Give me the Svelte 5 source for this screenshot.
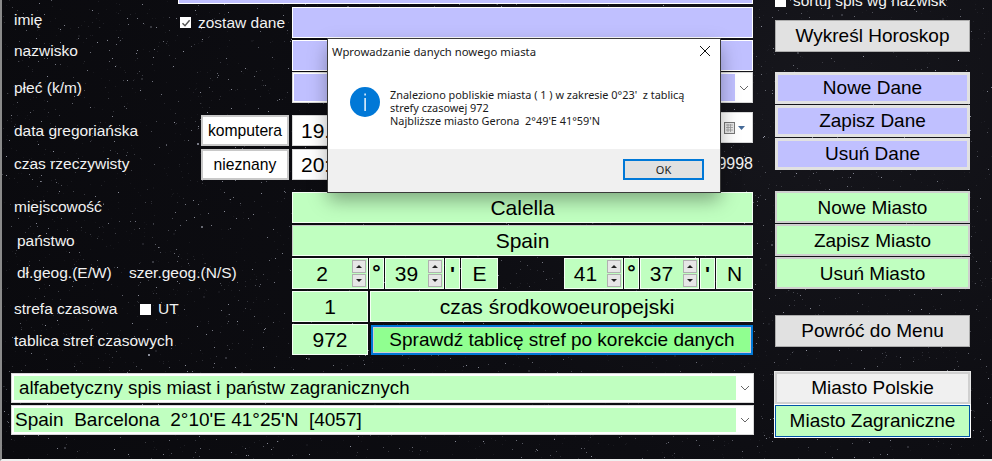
<script>
  let seed = 7;
  function rnd() { seed = (seed * 16807) % 2147483647; return seed / 2147483647; }
  const stars = Array.from({ length: 5200 }, () => {
    const r = rnd();
    return { x: Math.floor(rnd() * 992), y: Math.floor(rnd() * 461), s: r > 0.985 ? 2 : 1, o: (0.05 + Math.pow(rnd(), 3) * 0.6).toFixed(2) };
  });
</script>

<div class="screen">
  <svg class="sky" width="992" height="461" aria-hidden="true">
    {#each stars as st}<rect x={st.x} y={st.y} width={st.s} height={st.s} fill="#d8dcec" opacity={st.o} />{/each}
  </svg>

  <main class="main">
    <section class="form">
      <div class="toprow"><div class="topfield"></div></div>

      <div class="row r-imie">
        <span class="label l-imie">imię</span>
        <span class="keep"><span class="check"><svg width="12" height="12" viewBox="0 0 12 12"><path d="M2.500 6.200 5 8.800 9.600 3.200" fill="none" stroke="#555" stroke-width="1.400"/></svg></span>zostaw dane</span>
        <div class="field lav grow"></div>
      </div>
      <div class="row r-naz">
        <span class="label">nazwisko</span>
        <div class="field lav grow"></div>
      </div>
      <div class="row r-plec">
        <span class="label">płeć (k/m)</span>
        <div class="select grow"><div class="selin lav-bg"></div><svg class="chev" width="10" height="6" viewBox="0 0 10 6"><path d="M1 1 5 5 9 1" fill="none" stroke="#666" stroke-width="1"/></svg></div>
      </div>

      <div class="row r-data">
        <span class="label wide">data gregoriańska</span>
        <div class="smallbtn">komputera</div>
        <div class="field white timef">19.</div>
        <div class="picker"><svg width="22" height="14" viewBox="0 0 22 14"><rect x="0.500" y="1.500" width="10" height="11" fill="#e8e8e8" stroke="#777"/><path d="M2 4h7M2 6.500h7M2 9h7M4 3v8M6.500 3v8" stroke="#999" stroke-width="0.800"/><path d="M14 5h7l-3.500 4z" fill="#456a98"/></svg></div>
      </div>
      <div class="row r-czas">
        <span class="label wide">czas rzeczywisty</span>
        <div class="smallbtn">nieznany</div>
        <div class="field white timef">20:</div>
        <span class="juldate">9998</span>
      </div>

      <div class="row r-miej">
        <span class="label">miejscowość</span>
        <div class="field grn grow center">Calella</div>
      </div>
      <div class="row r-pan">
        <span class="label in">państwo</span>
        <div class="field grn grow center edged">Spain</div>
      </div>
      <div class="row r-geo">
        <span class="label in geo1">dł.geog.(E/W)</span>
        <span class="label geo2">szer.geog.(N/S)</span>
        <div class="coords">
          <div class="field grn num w76">2<span class="spin"><i class="up"></i><i class="down"></i></span></div>
          <div class="field grn sym"><span class="raised">°</span></div>
          <div class="field grn num w60">39<span class="spin"><i class="up"></i><i class="down"></i></span></div>
          <div class="field grn sym">'</div>
          <div class="field grn dir">E</div>
          <div class="gapfill"></div>
          <div class="field grn num w60">41<span class="spin"><i class="up"></i><i class="down"></i></span></div>
          <div class="field grn sym"><span class="raised">°</span></div>
          <div class="field grn num w60">37<span class="spin"><i class="up"></i><i class="down"></i></span></div>
          <div class="field grn sym">'</div>
          <div class="field grn dir">N</div>
        </div>
      </div>
      <div class="row r-strefa">
        <span class="label strefa">strefa czasowa</span>
        <span class="ut"><span class="check"></span>UT</span>
        <div class="field grn w76 center">1</div>
        <div class="field grn grow center offset">czas środkowoeuropejski</div>
      </div>
      <div class="row r-tab">
        <span class="label">tablica stref czasowych</span>
        <div class="field grn w76 center">972</div>
        <div class="focusbtn">Sprawdź tablicę stref po korekcie danych</div>
      </div>

      <div class="combo first">
        <div class="comboin">alfabetyczny spis miast i państw zagranicznych</div>
        <svg class="chev" width="10" height="6" viewBox="0 0 10 6"><path d="M1 1 5 5 9 1" fill="none" stroke="#666" stroke-width="1"/></svg>
      </div>
      <div class="combo">
        <div class="comboin tight">Spain&nbsp; Barcelona&nbsp; 2°10'E 41°25'N&nbsp; [4057]</div>
        <svg class="chev" width="10" height="6" viewBox="0 0 10 6"><path d="M1 1 5 5 9 1" fill="none" stroke="#666" stroke-width="1"/></svg>
      </div>
    </section>

    <aside class="side">
      <div class="sort"><span class="check"></span>sortuj spis wg nazwisk</div>
      <div class="btn gray b-wyk">Wykreśl Horoskop</div>
      <div class="btn lavb b-nowe">Nowe Dane</div>
      <div class="btn lavb">Zapisz Dane</div>
      <div class="btn lavb">Usuń Dane</div>
      <div class="btn grnb b-miasto">Nowe Miasto</div>
      <div class="btn grnb">Zapisz Miasto</div>
      <div class="btn grnb">Usuń Miasto</div>
      <div class="btn gray b-menu">Powróć do Menu</div>
      <div class="btn pol">Miasto Polskie</div>
      <div class="btn zag">Miasto Zagraniczne</div>
    </aside>
  </main>

  <div class="dialog" role="dialog">
    <div class="dtitle">Wprowadzanie danych nowego miasta
      <svg class="close" width="12" height="12" viewBox="0 0 12 12"><path d="M1 1l10 10M11 1 1 11" stroke="#111" stroke-width="1"/></svg>
    </div>
    <div class="dbody">
      <svg class="info" width="30" height="30" viewBox="0 0 30 30"><circle cx="15" cy="15" r="15" fill="#0078d7"/><rect x="14.400" y="6.500" width="1.400" height="2" fill="#fff"/><rect x="14.400" y="11" width="1.400" height="13" fill="#fff"/></svg>
      <p>Znaleziono pobliskie miasta ( 1 ) w zakresie 0°23'&nbsp; z tablicą<br>strefy czasowej 972<br>Najbliższe miasto Gerona&nbsp; 2°49'E 41°59'N</p>
    </div>
    <div class="dfoot"><div class="ok">OK</div></div>
  </div>
</div>

<style>
  :global(body) { margin: 0; background: #000; }
  .screen {
    position: relative; width: 992px; height: 461px; overflow: hidden; box-sizing: border-box;
    background: radial-gradient(circle at 82% 20%, #16161c 0, #0d0d12 45%, #0a0a0e 100%);
    border-left: 2px solid #8a8a8a; border-bottom: 2px solid #f0f0f0;
    font-family: "Liberation Sans", Arial, sans-serif; color: #000;
  }
  .sky { position: absolute; left: -2px; top: 0; }
  .main { position: relative; display: flex; }
  .form { width: 773px; flex: none; }
  .side { display: flex; flex-direction: column; width: 195px; }

  .toprow { height: 5px; padding-left: 176px; }
  .topfield { height: 3px; width: 573px; background: #c0c0ff; border: 1px solid #fff; border-top: 0; }

  .row { display: flex; align-items: stretch; width: 751px; height: 31px; position: relative; }
  .r-imie { margin-top: 2px; }
  .r-naz { margin-top: 2px; }
  .r-plec { margin-top: 1px; }
  .r-data { margin-top: 12px; }
  .r-czas { margin-top: 3px; }
  .r-miej { margin-top: 12px; }
  .r-pan, .r-geo, .r-strefa, .r-tab { margin-top: 2px; }

  .label { box-sizing: border-box; width: 290px; padding-left: 12px; flex: none; color: #f2f2f2; font-size: 15.500px; line-height: 30px; white-space: nowrap; }
  .label.in { padding-left: 15px; }
  .label.wide { width: 199px; }
  .label.geo1 { width: 127px; }
  .label.geo2 { width: 163px; padding-left: 0; }
  .label.strefa { width: 138px; margin-top: 3px; }
  .label.l-imie { width: 178px; margin-top: -2px; }
  .r-naz .label { margin-top: -4px; }
  .r-plec .label { margin-top: 1px; }
  .r-data .label { margin-top: 1px; }
  .r-pan .label { margin-top: 1px; }
  .r-tab .label { margin-top: 2px; }

  .keep { width: 112px; flex: none; color: #f2f2f2; font-size: 15.500px; display: flex; align-items: center; white-space: nowrap; }
  .ut { width: 152px; flex: none; color: #f2f2f2; font-size: 15.500px; display: flex; align-items: center; white-space: nowrap; padding-top: 5px; box-sizing: border-box; }
  .check { width: 11px; height: 11px; background: #fff; display: inline-block; margin-right: 7px; flex: none; }
  .check svg { display: block; }

  .field { box-sizing: border-box; border: 1px solid #fff; display: flex; align-items: center; position: relative; font-size: 21px; white-space: nowrap; }
  .grow { flex: 1; }
  .lav { background: #c0c0ff; }
  .grn { background: #c0ffc0; border-color: #f4fff4; }
  .edged { border-color: #c8c8c8 #f4fff4 #f4fff4 #c8c8c8; }
  .offset { padding-right: 9px; }
  .white { background: #fff; border-color: #d8d8d8; }
  .center { justify-content: center; }
  .w76 { width: 76px; flex: none; margin-right: 2px; }
  .timef { width: 110px; flex: none; padding-left: 8px; }
  .picker { width: 60px; margin-left: auto; margin-top: -3px; margin-bottom: 3px; box-sizing: border-box; background: #fff; border: 1px solid #d8d8d8; display: flex; align-items: center; justify-content: flex-end; padding-right: 6px; }
  .juldate { margin-left: auto; color: #f2f2f2; font-size: 16px; line-height: 30px; }

  .select { box-sizing: border-box; background: #fff; border: 1px solid #d8d8d8; padding: 1px; display: flex; align-items: stretch; position: relative; }
  .selin { flex: 1; margin-right: 16px; }
  .lav-bg { background: #c0c0ff; }
  .chev { position: absolute; right: 3px; top: 50%; margin-top: -3px; }

  .smallbtn { width: 88px; flex: none; margin-right: 3px; box-sizing: border-box; background: #fff; border: 2px solid #c8c8c8; font-size: 15.700px; display: flex; align-items: center; justify-content: center; }

  .coords { display: flex; flex: 1; gap: 1px; }
  .coords .w76 { margin-right: 0; }
  .num { justify-content: center; padding-right: 16px; }
  .w60 { width: 59px; flex: none; }
  .sym { width: 15px; flex: none; justify-content: center; font-weight: bold; }
  .raised { margin-top: -3px; }
  .dir { width: 37px; flex: none; justify-content: center; }
  .gapfill { flex: 1; }
  .spin { position: absolute; right: 1px; top: 1px; bottom: 1px; width: 14px; display: flex; flex-direction: column; gap: 1px; }
  .spin i { flex: 1; background: #e6e6e6; border: 1px solid #b0b0b0; box-sizing: border-box; position: relative; }
  .spin i::after { content: ""; position: absolute; left: 3px; top: 4px; border-left: 3px solid transparent; border-right: 3px solid transparent; }
  .spin .up::after { border-bottom: 3px solid #222; }
  .spin .down::after { border-top: 3px solid #222; }

  .focusbtn { flex: 1; box-sizing: border-box; background: #90ff90; border: 2px solid #0078d7; outline: 1px solid #d0d0d0; outline-offset: -3px; display: flex; align-items: center; justify-content: center; font-size: 19px; margin: 1px 0 0 1px; white-space: nowrap; }

  .combo { position: relative; box-sizing: border-box; margin-left: 9px; width: 743px; height: 30px; background: #fff; border: 1px solid #d8d8d8; padding: 2px; }
  .combo.first { margin-top: 18px; margin-bottom: 2px; }
  .comboin { background: #c0ffc0; width: 722px; height: 24px; line-height: 24px; font-size: 18.700px; padding-left: 5px; box-sizing: border-box; white-space: nowrap; }
  .comboin.tight { padding-left: 1px; font-size: 19px; }

  .btn { box-sizing: border-box; width: 195px; height: 32px; flex: none; margin-bottom: 1px; display: flex; align-items: center; justify-content: center; font-size: 19px; white-space: nowrap; }
  .gray { background: #e1e1e1; border: 1px solid #adadad; }
  .lavb { background: #c0c0ff; border: 3px solid #e1e1e1; }
  .grnb { background: #c0ffc0; border: 2px solid #cfcfcf; padding-top: 1px; }
  .b-wyk { margin-top: 9px; margin-bottom: 20px; }
  .b-miasto { margin-top: 20px; }
  .b-menu { margin-top: 25px; margin-bottom: 25px; }
  .sort { height: 20px; margin-top: -9px; color: #f2f2f2; font-size: 15.500px; display: flex; align-items: center; line-height: 1; }
  .pol { background: #f0f0f0; border: 2px solid #d0d0d0; outline: 1px solid #e8e8e8; }
  .zag { background: #c0ffc0; border: 1px solid #0054a6; outline: 1px solid #fff; }

  .dialog { position: absolute; left: 326px; top: 39px; width: 392px; height: 153px; background: #fff; display: flex; flex-direction: column; box-shadow: 0 0 0 1px #3a3a3a, 0 8px 18px rgba(0,0,0,.35); font-family: "Noto Sans", "Open Sans", sans-serif; color: #1a1a1a; }
  .dtitle { height: 24px; flex: none; padding-left: 4px; font-size: 11.300px; line-height: 25px; position: relative; }
  .close { position: absolute; right: 9px; top: 6px; }
  .dbody { flex: 1; display: flex; align-items: flex-start; padding: 25px 0 0 22px; }
  .info { flex: none; margin-right: 10px; margin-top: -1px; }
  .dbody p { margin: 0; font-size: 10.900px; line-height: 13.200px; white-space: nowrap; }
  .dfoot { height: 43px; flex: none; background: #f0f0f0; display: flex; justify-content: flex-end; align-items: flex-start; padding: 10px 16px 0 0; box-sizing: border-box; }
  .ok { width: 81px; height: 21px; box-sizing: border-box; background: #e1e1e1; border: 2px solid #0078d7; display: flex; align-items: center; justify-content: center; font-size: 11px; }
</style>
